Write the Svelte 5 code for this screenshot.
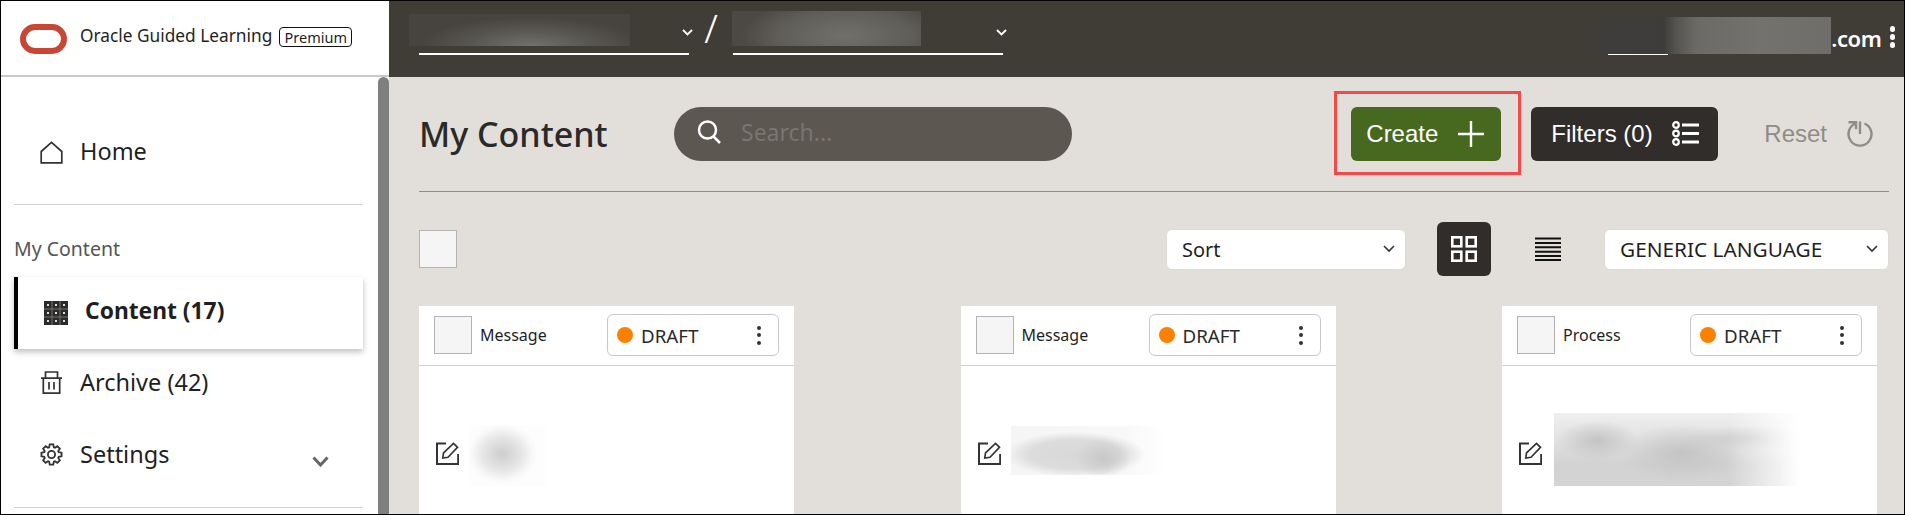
<script>
  const cards = [
    { type: 'Message', blur: 'blur-a' },
    { type: 'Message', blur: 'blur-b' },
    { type: 'Process', blur: 'blur-c' }
  ];

  // 8 tooth cog outline around 0,0
  function gearPath() {
    const pts = [];
    const teeth = 8;
    for (let i = 0; i < teeth; i++) {
      const a = (i / teeth) * Math.PI * 2;
      const step = (Math.PI * 2) / teeth;
      [[-0.28, 7.6], [-0.16, 10.2], [0.16, 10.2], [0.28, 7.6]].forEach(([f, r]) => {
        const t = a + f * step * 1.4;
        pts.push(`${(Math.cos(t) * r).toFixed(2)} ${(Math.sin(t) * r).toFixed(2)}`);
      });
    }
    return 'M' + pts.join('L') + 'Z';
  }
</script>

<div class="shot">
  <div class="brand">
    <svg class="logo" width="47" height="30" viewBox="0 0 47 30">
      <rect x="3" y="3" width="41" height="24" rx="12" fill="none" stroke="#c74634" stroke-width="6" />
    </svg>
    <span class="brand-name">Oracle Guided Learning</span>
    <span class="badge">Premium</span>
  </div>

  <header class="topbar">
    <div class="picker picker-one">
      <div class="smudge smudge-one"></div>
      <svg class="caret" width="11" height="7" viewBox="0 0 11 7"><path d="M1 1l4.5 4.5L10 1" fill="none" stroke="#fff" stroke-width="1.8" /></svg>
    </div>
    <span class="slash">/</span>
    <div class="picker picker-two">
      <div class="smudge smudge-two"></div>
      <svg class="caret" width="11" height="7" viewBox="0 0 11 7"><path d="M1 1l4.5 4.5L10 1" fill="none" stroke="#fff" stroke-width="1.8" /></svg>
    </div>
    <div class="user">
      <div class="user-name"><div class="smudge smudge-user"></div></div>
      <span class="domain">.com</span>
      <span class="dots"><i></i><i></i><i></i></span>
    </div>
  </header>

  <aside class="sidebar">
    <nav class="nav">
      <a class="item home">
        <svg width="23" height="23" viewBox="0 0 23 23"><path d="M1.2 21.8V10.5L11.5 1.3l10.3 9.2v11.3z" fill="none" stroke="#333" stroke-width="1.7" /></svg>
        <span>Home</span>
      </a>
      <hr />
      <div class="section">My Content</div>
      <a class="item active">
        <svg width="24" height="24" viewBox="0 0 24 24">
          <rect width="24" height="24" fill="#2b2b2b" />
          <path d="M8 0v24M16 0v24M0 8h24M0 16h24" stroke="#77736e" stroke-width="1" />
          <path d="M3 3h2v2H3zM11 3h2v2h-2zM19 3h2v2h-2zM3 11h2v2H3zM11 11h2v2h-2zM19 11h2v2h-2zM3 19h2v2H3zM11 19h2v2h-2zM19 19h2v2h-2z" fill="#ddd" />
        </svg>
        <span>Content (17)</span>
      </a>
      <a class="item archive">
        <svg width="23" height="23" viewBox="0 0 23 23" fill="none" stroke="#333" stroke-width="1.7">
          <path d="M5.5 7V1h12v6M1 7.2h21M3.3 7.2v15h16.4v-15M9 11v7.5M14 11v7.5" />
        </svg>
        <span>Archive (42)</span>
      </a>
      <a class="item settings">
        <svg width="23" height="23" viewBox="-11.5 -11.5 23 23" fill="none" stroke="#333" stroke-width="1.8">
          <path d={gearPath()} />
          <circle r="3.6" />
        </svg>
        <span>Settings</span>
        <svg class="more" width="17" height="11" viewBox="0 0 17 11"><path d="M1.5 1.5l7 7.5 7-7.5" fill="none" stroke="#666" stroke-width="3" /></svg>
      </a>
      <hr />
    </nav>
    <div class="scrollbar"></div>
  </aside>

  <main class="main">
    <div class="toolbar">
      <h1>My Content</h1>
      <div class="search">
        <svg width="25" height="24" viewBox="0 0 25 24" fill="none" stroke="#fff" stroke-width="2.5">
          <circle cx="10.5" cy="10" r="8.5" /><path d="M16.5 16.5l6.5 6.5" />
        </svg>
        <span>Search...</span>
      </div>
      <button class="btn create">
        Create
        <svg width="26" height="26" viewBox="0 0 26 26"><path d="M13 0v26M0 13h26" stroke="#fff" stroke-width="2.4" /></svg>
      </button>
      <button class="btn filters">
        Filters (0)
        <svg width="27" height="26" viewBox="0 0 27 26" fill="none" stroke="#fff">
          <circle cx="4" cy="4" r="2.8" stroke-width="2.2" /><circle cx="4" cy="12.5" r="2.8" stroke-width="2.2" /><circle cx="4" cy="21" r="2.8" stroke-width="2.2" />
          <path d="M10 4h17M10 12.5h17M10 21h17" stroke-width="2.8" />
        </svg>
      </button>
      <div class="reset">
        Reset
        <svg width="26" height="26" viewBox="0 0 26 26" fill="none" stroke="#8f8c88" stroke-width="2.4">
          <path d="M8.5 2.5A11.5 11.5 0 1 0 17.5 2.5M13 0.5v12.5M1.5 1.2h7.5v7" />
        </svg>
      </div>
    </div>

    <div class="controls">
      <div class="check"></div>
      <div class="select sort">
        <span>Sort</span>
        <svg width="12" height="8" viewBox="0 0 12 8"><path d="M1 1l5 5 5-5" fill="none" stroke="#333" stroke-width="1.6" /></svg>
      </div>
      <button class="view on">
        <svg width="26" height="26" viewBox="0 0 26 26" fill="none" stroke="#fff" stroke-width="2.6">
          <rect x="1.3" y="1.3" width="9" height="9" /><rect x="15.7" y="1.3" width="9" height="9" /><rect x="1.3" y="15.7" width="9" height="9" /><rect x="15.7" y="15.7" width="9" height="9" />
        </svg>
      </button>
      <button class="view">
        <svg width="26" height="24" viewBox="0 0 26 24"><path d="M0 1.5h26M0 5.9h26M0 10.3h26M0 14.7h26M0 19.1h26M0 23h26" stroke="#111" stroke-width="2" /></svg>
      </button>
      <div class="select lang">
        <span>GENERIC LANGUAGE</span>
        <svg width="12" height="8" viewBox="0 0 12 8"><path d="M1 1l5 5 5-5" fill="none" stroke="#333" stroke-width="1.6" /></svg>
      </div>
    </div>

    <div class="cards">
      {#each cards as card}
        <article class="card">
          <div class="card-head">
            <div class="check small"></div>
            <span class="type">{card.type}</span>
            <div class="status">
              <i class="dot"></i>
              <span>DRAFT</span>
              <span class="kebab"><i></i><i></i><i></i></span>
            </div>
          </div>
          <div class="card-body">
            <svg class="edit" width="23" height="23" viewBox="0 0 23 23" fill="none" stroke="#333" stroke-width="2">
              <path d="M10 1.5H1V22h21.2V12" />
              <path d="M6.8 16l.7-5L17.5 1.5l4 3.8L12 15.3z" stroke-width="1.7" />
            </svg>
            <div class="redacted {card.blur}"></div>
          </div>
        </article>
      {/each}
    </div>
  </main>
</div>

<style>
  :global(body) {
    margin: 0;
  }

  .shot {
    width: 1905px;
    height: 515px;
    box-sizing: border-box;
    border: 1px solid #000;
    display: grid;
    grid-template-columns: 388px 1fr;
    grid-template-rows: 76px 1fr;
    overflow: hidden;
    font-family: "Noto Sans", sans-serif;
    color: #1f1f1f;
    background: #fff;
  }

  .brand {
    display: flex;
    align-items: center;
    padding-left: 19px;
    border-bottom: 2px solid #c9c9c9;
    box-sizing: border-box;
  }
  .logo {
    flex: none;
    margin-top: 1px;
  }
  .brand-name {
    margin-left: 13px;
    margin-top: -5px;
    font-size: 17.3px;
    white-space: nowrap;
  }
  .badge {
    margin-left: 7px;
    margin-top: -2px;
    height: 20px;
    width: 73px;
    box-sizing: border-box;
    border: 1px solid #111;
    border-radius: 4px;
    font-size: 14.5px;
    line-height: 18px;
    text-align: center;
  }

  .topbar {
    display: flex;
    align-items: flex-start;
    background: #403c36;
    padding-left: 30px;
    color: #fff;
  }
  .picker {
    position: relative;
    height: 54px;
    box-sizing: border-box;
    border-bottom: 2px solid #fff;
  }
  .picker-one {
    width: 270px;
  }
  .picker-two {
    width: 270px;
    margin-left: 14px;
  }
  .caret {
    position: absolute;
    right: -4px;
    top: 28px;
  }
  .smudge {
    position: absolute;
  }
  .smudge-one {
    left: -10px;
    top: 13px;
    width: 221px;
    height: 32px;
    background: radial-gradient(ellipse 50% 90% at 55% 100%, #72716d 0%, #585651 55%, #47443f 100%);
  }
  .smudge-two {
    left: -1px;
    top: 10px;
    width: 189px;
    height: 35px;
    background: radial-gradient(ellipse 55% 110% at 60% 70%, #71706b 0%, #5f5d58 65%, #4c4944 100%);
  }
  .slash {
    width: 30px;
    text-align: center;
    font-size: 39px;
    font-weight: 300;
    line-height: 52px;
    margin-top: 1px;
    padding-left: 14px;
    box-sizing: border-box;
  }
  .user {
    margin-left: auto;
    display: flex;
    align-items: center;
    height: 74px;
    padding-right: 9px;
  }
  .user-name {
    position: relative;
    width: 60px;
    height: 54px;
    align-self: flex-start;
    box-sizing: border-box;
    border-bottom: 2px solid #fff;
    margin-right: 163px;
  }
  .smudge-user {
    left: -9px;
    top: 16px;
    width: 232px;
    height: 37px;
    background: linear-gradient(90deg, #3d3d3b 0%, #3d3c3a 28%, #555350 33%, #6b6a66 42%, #73726e 70%, #6e6d69 100%);
  }
  .domain {
    font-size: 22px;
    font-weight: 600;
    margin-right: 8px;
    line-height: 1;
    letter-spacing: -0.4px;
  }
  .dots {
    display: flex;
    flex-direction: column;
    gap: 2.5px;
    margin-top: -2px;
  }
  .dots i {
    width: 5.5px;
    height: 5.5px;
    border-radius: 50%;
    background: #fff;
  }

  .sidebar {
    display: flex;
    min-height: 0;
  }
  .nav {
    flex: 1;
    padding: 50px 15px 0 13px;
    min-width: 0;
  }
  .scrollbar {
    width: 11.5px;
    flex: none;
    background: #7f7f7f;
    border-radius: 6px 6px 0 0;
  }
  .nav hr {
    margin: 0;
    border: 0;
    border-top: 1px solid #d0d0d0;
  }
  .item {
    display: flex;
    align-items: center;
    gap: 17px;
    padding-left: 26px;
    height: 50px;
    font-size: 23.5px;
    color: #1f1f1f;
  }
  .home {
    margin-bottom: 27px;
  }
  .home span {
    margin-top: -2px;
  }
  .section {
    margin-top: 29px;
    height: 30px;
    line-height: 30px;
    font-size: 19.5px;
    color: #555;
  }
  .active {
    margin-top: 13px;
    height: 72px;
    border-left: 4px solid #000;
    padding-left: 26px;
    font-size: 22.8px;
    font-weight: 700;
    box-shadow: 0 3px 6px rgba(0, 0, 0, 0.25);
    background: #fff;
  }
  .active span {
    margin-top: -5px;
  }
  .archive {
    margin-top: 8px;
  }
  .settings {
    margin-top: 22px;
    margin-bottom: 28px;
  }
  .more {
    margin-left: auto;
    margin-right: 34px;
    margin-top: 14px;
  }

  .main {
    background: #e2dfda;
    min-width: 0;
    padding-left: 30px;
  }
  .toolbar {
    display: flex;
    align-items: center;
    width: 1470px;
    height: 54px;
    padding: 30px 0;
    border-bottom: 1px solid #8f8c88;
  }
  h1 {
    margin: 0;
    width: 255px;
    flex: none;
    font-size: 34px;
    font-weight: 500;
    color: #2a2a2a;
  }
  .search {
    width: 398px;
    height: 54px;
    flex: none;
    box-sizing: border-box;
    background: #5c5750;
    border-radius: 27px;
    display: flex;
    align-items: center;
    gap: 19px;
    padding: 0 0 5px 23px;
    font-size: 23px;
    color: #797570;
  }
  .btn {
    position: relative;
    display: flex;
    align-items: center;
    height: 54px;
    border: 0;
    border-radius: 6px;
    color: #fff;
    font-family: "Liberation Sans", Arial, sans-serif;
    font-size: 24px;
    padding: 0;
    box-sizing: border-box;
  }
  .create {
    margin-left: auto;
    width: 150px;
    background: #47691f;
    padding-left: 15px;
    gap: 20px;
  }
  .create::after {
    content: "";
    position: absolute;
    left: -17px;
    right: -20px;
    top: -16px;
    bottom: -14px;
    border: 3px solid #f4484a;
  }
  .filters {
    margin-left: 30px;
    width: 187px;
    background: #312d2a;
    padding-left: 20px;
    gap: 19px;
  }
  .reset {
    margin-left: 46px;
    margin-right: 16px;
    display: flex;
    align-items: center;
    gap: 20px;
    font-family: "Liberation Sans", Arial, sans-serif;
    font-size: 24px;
    color: #8f8c88;
  }

  .controls {
    display: flex;
    align-items: center;
    width: 1470px;
    height: 54px;
    margin-top: 30px;
  }
  .check {
    width: 38px;
    height: 38px;
    box-sizing: border-box;
    flex: none;
    background: #f5f5f5;
    border: 1px solid #b3b3b3;
  }
  .select {
    height: 41px;
    box-sizing: border-box;
    background: #fff;
    border-radius: 6px;
    border: 1px solid #dedbd5;
    display: flex;
    align-items: center;
    justify-content: space-between;
    padding: 0 10px 0 15px;
    font-size: 20px;
  }
  .sort {
    margin-left: auto;
    width: 240px;
    margin-right: 31px;
  }
  .view {
    width: 54px;
    height: 54px;
    border: 0;
    padding: 0;
    background: none;
    border-radius: 6px;
    display: flex;
    align-items: center;
    justify-content: center;
  }
  .view.on {
    background: #312d2a;
    margin-right: 30px;
  }
  .lang {
    margin-left: 29px;
    width: 285px;
    font-size: 20.8px;
  }

  .cards {
    display: flex;
    justify-content: space-between;
    width: 1458px;
    margin-top: 30px;
  }
  .card {
    width: 375px;
    height: 260px;
    background: #fff;
  }
  .card-head {
    height: 60px;
    box-sizing: border-box;
    border-bottom: 1px solid #d0d0d0;
    display: flex;
    align-items: flex-start;
    padding: 8px 15px 0;
  }
  .check.small {
    margin-top: 2px;
  }
  .type {
    margin-left: 8px;
    font-size: 16px;
    line-height: 38px;
    margin-top: 2px;
  }
  .status {
    margin-left: auto;
    width: 172px;
    height: 42px;
    box-sizing: border-box;
    border: 1px solid #c9c9c9;
    border-radius: 6px;
    display: flex;
    align-items: center;
    padding-left: 9px;
    gap: 8px;
    font-size: 18.7px;
    color: #2a2a2a;
  }
  .dot {
    width: 16px;
    height: 16px;
    border-radius: 50%;
    background: #ff8000;
  }
  .kebab {
    margin-left: auto;
    margin-right: 17px;
    display: flex;
    flex-direction: column;
    gap: 3.5px;
  }
  .kebab i {
    width: 4px;
    height: 4px;
    border-radius: 50%;
    background: #333;
  }
  .card-body {
    display: flex;
    align-items: flex-start;
    padding-left: 17px;
  }
  .edit {
    margin-top: 76px;
    flex: none;
  }
  .redacted {
    margin-left: 10px;
  }
  .blur-a {
    width: 77px;
    height: 61px;
    margin-top: 59px;
    background: radial-gradient(ellipse 46% 50% at 43% 47%, #cdcdcd 0%, #e6e6e6 55%, #f8f8f8 85%, #fdfdfd 100%);
  }
  .blur-b {
    width: 153px;
    height: 49px;
    margin-top: 60px;
    background:
      radial-gradient(ellipse 18% 42% at 60% 66%, #c8c8c8 0%, rgba(205, 205, 205, 0) 100%),
      radial-gradient(ellipse 46% 46% at 42% 58%, #d8d8d8 0%, #dcdcdc 65%, rgba(240, 240, 240, 0) 100%),
      linear-gradient(90deg, #f5f5f5, #f8f8f8 75%, #fff);
  }
  .blur-c {
    width: 256px;
    height: 73px;
    margin-top: 47px;
    margin-left: 12px;
    background:
      radial-gradient(ellipse 24% 40% at 50% 55%, #c4c4c4 0%, rgba(200, 200, 200, 0) 100%),
      radial-gradient(ellipse 16% 28% at 17% 38%, #c4c4c4 0%, rgba(200, 200, 200, 0) 100%),
      radial-gradient(ellipse 26% 18% at 76% 35%, #cdcdcd 0%, rgba(210, 210, 210, 0) 100%),
      linear-gradient(180deg, #efefef 0%, #e2e2e2 35%, #d2d2d2 70%, #d4d4d4 100%);
    -webkit-mask-image: linear-gradient(90deg, #000 0%, #000 68%, transparent 96%);
    mask-image: linear-gradient(90deg, #000 0%, #000 68%, transparent 96%);
  }
</style>
